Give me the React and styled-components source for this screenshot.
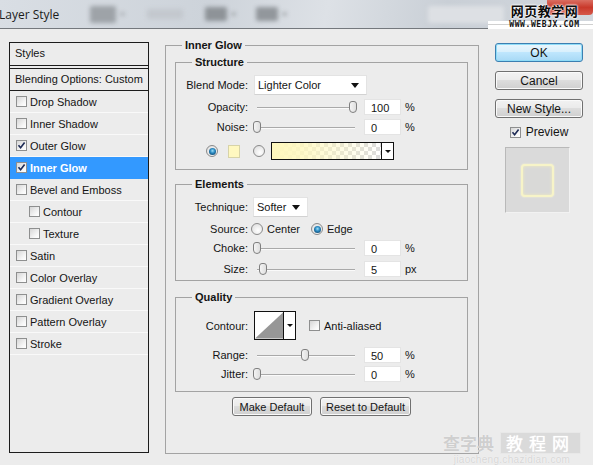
import React from "react"
import styled, { createGlobalStyle } from "styled-components"

const GlobalStyle = createGlobalStyle`
  html, body {
    margin: 0;
    padding: 0;
    background: #ececec;
  }
  body {
    font-family: "Liberation Sans", Arial, sans-serif;
    font-size: 11px;
    color: #141414;
  }
`

const Window = styled.div`
  position: relative;
  width: 593px;
  height: 465px;
  overflow: hidden;
  background: #ececec;
`

const TitleBar = styled.div`
  position: relative;
  height: 28px;
  display: flex;
  align-items: center;
  border-bottom: 1px solid #74787d;
  background: linear-gradient(100deg, #d9dee4 0%, #cdd3da 35%, #dde1e6 55%, #c9cfd6 75%, #d3d8de 100%);
  overflow: hidden;
`

const Title = styled.span`
  margin-left: -1px;
  font-family: "Open Sans", "Liberation Sans", sans-serif;
  font-size: 12px;
  color: #1b1b1b;
  white-space: nowrap;
`

const Ghost = styled.span`
  flex: none;
  width: ${p => p.$w}px;
  height: ${p => p.$h || 14}px;
  margin-left: ${p => p.$ml}px;
  background: ${p => p.$c};
  border-radius: 2px;
  filter: blur(2px);
`

const CloseButton = styled.div`
  position: absolute;
  top: -4px;
  right: 0;
  width: 46px;
  height: 19px;
  border-radius: 0 0 4px 4px;
  background: linear-gradient(#e38a7e, #c9392b 60%, #d6584a);
`

const Body = styled.div`
  display: flex;
  align-items: flex-start;
  padding: 10px 0 0 9px;
`

const StylesPanel = styled.div`
  flex: none;
  width: 140px;
  height: 411px;
  margin-top: 3px;
  box-sizing: border-box;
  border: 1px solid #1c1c1c;
`

const PanelHeader = styled.div`
  height: 22px;
  line-height: 21px;
  padding-left: 5px;
  border-bottom: 1px solid #1c1c1c;
  margin-bottom: 2px;
`

const BlendingRow = styled.div`
  height: 21px;
  line-height: 20px;
  padding-left: 5px;
  border-top: 1px solid #1c1c1c;
  border-bottom: 1px solid #1c1c1c;
  white-space: nowrap;
`

const StyleItem = styled.div`
  display: flex;
  align-items: center;
  gap: 3px;
  height: 21px;
  padding-left: ${p => (p.$indent ? 19 : 6)}px;
  border-bottom: 1px solid ${p => (p.$active ? "#3399ff" : "#f9f9f9")};
  background: ${p => (p.$active ? "#3399ff" : "transparent")};
  color: ${p => (p.$active ? "#fff" : "#141414")};
  font-weight: ${p => (p.$active ? "bold" : "normal")};
  white-space: nowrap;
`

const Box = styled.span`
  position: relative;
  flex: none;
  width: 11px;
  height: 11px;
  box-sizing: border-box;
  border: 1px solid #8e8f8f;
  background: linear-gradient(135deg, #d6d6d6, #f7f7f7 70%, #fff);
  margin-left: ${p => p.$ml || 0}px;

  svg {
    position: absolute;
    left: 0;
    top: 0;
  }
`

const Radio = styled.span`
  flex: none;
  display: inline-flex;
  align-items: center;
  justify-content: center;
  width: 12px;
  height: 12px;
  box-sizing: border-box;
  margin-left: ${p => p.$ml || 0}px;
  border: 1px solid #8a8a8a;
  border-radius: 50%;
  background: radial-gradient(circle at 60% 65%, #fff, #d9d9d9);

  &::after {
    content: "";
    display: ${p => (p.$on ? "block" : "none")};
    width: 7px;
    height: 7px;
    border-radius: 50%;
    background: radial-gradient(circle at 50% 40%, #9fe0f7 0, #2c8cc4 40%, #0c3f63 90%);
  }
`

const Main = styled.fieldset`
  flex: none;
  width: 314px;
  height: 415px;
  box-sizing: border-box;
  margin: 0 0 0 16px;
  padding: 4px 10px 0 9px;
  border: 1px solid #a3a3a3;
  min-width: 0;
`

const Group = styled.fieldset`
  margin: ${p => p.$mt || 0}px 0 0;
  padding: ${p => p.$pt}px 0 ${p => p.$pb}px 0;
  border: 1px solid #a3a3a3;
  min-width: 0;
`

const Legend = styled.legend`
  margin-left: ${p => p.$ml ?? 16}px;
  padding: 0 3px;
  font-weight: bold;
  line-height: 13px;
  color: #141414;
`

const Row = styled.div`
  display: flex;
  align-items: center;
  height: ${p => p.$h}px;
  margin-top: ${p => p.$mt || 0}px;
  padding-left: ${p => p.$pl || 0}px;
  white-space: nowrap;
`

const Label = styled.span`
  flex: none;
  width: 72px;
  text-align: right;
`

const Text = styled.span`
  margin-left: ${p => p.$ml || 0}px;
`

const Select = styled.div`
  flex: none;
  display: flex;
  align-items: center;
  justify-content: space-between;
  width: ${p => p.$w}px;
  height: 20px;
  margin-left: ${p => p.$ml}px;
  padding: 0 7px 0 3px;
  box-sizing: border-box;
  background: #fff;
  border: 1px solid #e3e3e3;
  border-bottom-color: #d2d2d2;

  &::after {
    content: "";
    border-left: 4px solid transparent;
    border-right: 4px solid transparent;
    border-top: 5px solid #111;
  }
`

const Slider = styled.div`
  position: relative;
  flex: none;
  width: 104px;
  height: 12px;
  margin-left: 5px;

  &::before {
    content: "";
    position: absolute;
    left: 4px;
    right: 2px;
    top: 6px;
    height: 1px;
    background: #a9a9a9;
    box-shadow: 0 1px 0 #fafafa;
  }
`

const Thumb = styled.span`
  position: absolute;
  top: 0;
  left: ${p => p.$pos}px;
  width: 8px;
  height: 12px;
  box-sizing: border-box;
  border: 1px solid #7f7f7f;
  border-radius: 3px 3px 4px 4px;
  background: linear-gradient(90deg, #f4f4f4, #dedede);
`

const NumberField = styled.div`
  flex: none;
  width: 37px;
  height: 16px;
  margin-left: 7px;
  padding-left: 6px;
  box-sizing: border-box;
  line-height: 16px;
  background: #fff;
  border: 1px solid #e4e4e4;
`

const Unit = styled.span`
  margin-left: 4px;
`

const Swatch = styled.span`
  flex: none;
  width: 12px;
  height: 13px;
  margin-left: 10px;
  box-sizing: border-box;
  background: #fff8c0;
  border: 1px solid #d7d3a8;
`

const GradientPicker = styled.div`
  flex: none;
  display: flex;
  width: 123px;
  height: 18px;
  margin-left: 6px;
  box-sizing: border-box;
  border: 1px solid #111;
`

const GradientStrip = styled.span`
  flex: 1;
  background:
    linear-gradient(90deg, #fff8bd 0%, rgba(255, 248, 189, 0.85) 25%, rgba(255, 248, 189, 0) 100%),
    repeating-conic-gradient(#dcdcdc 0 25%, #fff 0 50%) 0 0 / 8px 8px;
`

const DropArrow = styled.span`
  flex: none;
  display: flex;
  align-items: center;
  justify-content: center;
  width: 11px;
  background: #fff;
  border-left: 1px solid #111;

  &::after {
    content: "";
    border-left: 3px solid transparent;
    border-right: 3px solid transparent;
    border-top: 3px solid #111;
  }
`

const ContourPicker = styled.div`
  flex: none;
  display: flex;
  width: 42px;
  height: 29px;
  margin-left: 6px;
  box-sizing: border-box;
  border: 1px solid #111;
  background: #fff;
`

const ButtonRow = styled.div`
  display: flex;
  justify-content: center;
  gap: 8px;
  margin-top: 5px;
`

const PushButton = styled.button`
  height: 19px;
  width: ${p => p.$w}px;
  padding: 0;
  font-family: inherit;
  font-size: ${p => p.$fs || 11}px;
  color: #141414;
  border-radius: 3px;
  border: 1px solid ${p => (p.$primary ? "#3c7fb1" : "#707070")};
  background: ${p =>
    p.$primary
      ? "linear-gradient(#eaf6fd 0%, #d9f0fc 45%, #bee6fd 50%, #a7d9f5 100%)"
      : "linear-gradient(#f2f2f2 0%, #ebebeb 45%, #dddddd 50%, #cfcfcf 100%)"};
  box-shadow: ${p => (p.$primary ? "0 0 0 1px #8fdcf7 inset" : "0 0 0 1px #fafafa inset")};
`

const SideColumn = styled.div`
  flex: none;
  display: flex;
  flex-direction: column;
  align-items: center;
  gap: 9px;
  width: 88px;
  margin: 4px 0 0 16px;
`

const PreviewToggle = styled.div`
  display: flex;
  align-items: center;
  gap: 5px;
  margin-top: -2px;
  font-size: 12px;
`

const PreviewBox = styled.div`
  display: flex;
  align-items: center;
  justify-content: center;
  width: 65px;
  height: 66px;
  margin: -1px 3px 0 0;
  box-sizing: border-box;
  background: #dadada;
  border-top: 1px solid #b9b9b9;
  border-left: 1px solid #b9b9b9;
  border-right: 1px solid #f2f2f2;
  border-bottom: 1px solid #f2f2f2;
`

const GlowSquare = styled.div`
  width: 33px;
  height: 33px;
  box-sizing: border-box;
  border-radius: 4px;
  border: 2px solid #f7f4c8;
  background: #d9d9d7;
  box-shadow: 0 0 2px #fbf8d0, inset 0 0 3px #f2eebc;
`

const TopMark = styled.div`
  position: absolute;
  top: 3px;
  right: -8px;
  width: 113px;
  display: flex;
  flex-direction: column;
  align-items: center;
  font-family: "Noto Sans CJK SC", sans-serif;
`

const TopMarkTitle = styled.span`
  font-size: 13px;
  line-height: 15px;
  font-weight: bold;
  letter-spacing: 0.5px;
  color: #0c0c0c;
  text-shadow: 0 0 2px #fff, 0 0 2px #fff, 0 0 2px #fff;
`

const TopMarkUrl = styled.span`
  margin-top: 3px;
  width: 100%;
  text-align: center;
  font-family: "DejaVu Sans Mono", monospace;
  font-size: 8px;
  line-height: 8px;
  font-weight: bold;
  letter-spacing: 0.6px;
  color: #111;
  background: linear-gradient(#fff 0 40%, #d0d0d0 40% 55%, #fff 55%);
`

const BottomMark = styled.div`
  position: absolute;
  right: 12px;
  bottom: 0;
  display: flex;
  flex-direction: column;
  align-items: center;
  color: #cfcfcf;
  font-family: "Noto Sans CJK SC", sans-serif;
  text-shadow: 0 0 1px #fff;
`

const BottomMarkTitle = styled.div`
  display: flex;
  align-items: center;
  gap: 6px;
  font-size: 17px;
  line-height: 20px;
  font-weight: bold;
`

const BoxedWord = styled.span`
  padding: 0 5px;
  letter-spacing: 6px;
  font-weight: normal;
  color: #fff;
  background: #dadada;
  border: 1px solid #e8e8e8;
`

const BottomMarkUrl = styled.span`
  font-family: "Liberation Sans", sans-serif;
  font-size: 10px;
  line-height: 11px;
  letter-spacing: 0.3px;
  color: #d6d6d6;
`

function Check({ on, ml }) {
  return (
    <Box $ml={ml}>
      {on && (
        <svg width="9" height="9" viewBox="0 0 9 9">
          <path d="M1.5 4.2 L3.6 6.8 L7.6 1.4" fill="none" stroke="#1d2a55" strokeWidth="1.6" />
        </svg>
      )}
    </Box>
  )
}

function SliderRow({ label, value, pos, unit, h = 16, mt }) {
  return (
    <Row $h={h} $mt={mt}>
      <Label>{label}</Label>
      <Slider>
        <Thumb $pos={pos} />
      </Slider>
      <NumberField>{value}</NumberField>
      <Unit>{unit}</Unit>
    </Row>
  )
}

const styleItems = [
  { name: "Drop Shadow" },
  { name: "Inner Shadow" },
  { name: "Outer Glow", on: true },
  { name: "Inner Glow", on: true, active: true },
  { name: "Bevel and Emboss" },
  { name: "Contour", indent: true },
  { name: "Texture", indent: true },
  { name: "Satin" },
  { name: "Color Overlay" },
  { name: "Gradient Overlay" },
  { name: "Pattern Overlay" },
  { name: "Stroke" },
]

export default function App() {
  return (
    <>
      <GlobalStyle />
      <Window>
        <TitleBar>
          <Title>Layer Style</Title>
          <Ghost $w={26} $ml={31} $c="#9ea3a8" $h={17} />
          <Ghost $w={5} $ml={4} $c="#aeb2b7" $h={4} />
          <Ghost $w={36} $ml={22} $c="#c3c8ce" $h={10} />
          <Ghost $w={22} $ml={22} $c="#8e9398" $h={14} />
          <Ghost $w={5} $ml={4} $c="#a7abb0" $h={4} />
          <Ghost $w={22} $ml={20} $c="#92979c" $h={14} />
          <Ghost $w={5} $ml={4} $c="#a7abb0" $h={4} />
          <Ghost $w={76} $ml={141} $c="#dde0e4" $h={17} />
          <CloseButton />
        </TitleBar>

        <Body>
          <StylesPanel>
            <PanelHeader>Styles</PanelHeader>
            <BlendingRow>Blending Options: Custom</BlendingRow>
            {styleItems.map(item => (
              <StyleItem key={item.name} $indent={item.indent} $active={item.active}>
                <Check on={item.on} />
                {item.name}
              </StyleItem>
            ))}
          </StylesPanel>

          <Main>
            <Legend $ml={7}>Inner Glow</Legend>

            <Group $pt={6} $pb={9}>
              <Legend>Structure</Legend>
              <Row $h={20}>
                <Label>Blend Mode:</Label>
                <Select $w={113} $ml={6}>Lighter Color</Select>
              </Row>
              <SliderRow label="Opacity:" value="100" pos={96} unit="%" mt={4} />
              <SliderRow label="Noise:" value="0" pos={0} unit="%" mt={4} />
              <Row $h={18} $mt={7} $pl={30}>
                <Radio $on />
                <Swatch />
                <Radio $ml={13} />
                <GradientPicker>
                  <GradientStrip />
                  <DropArrow />
                </GradientPicker>
              </Row>
            </Group>

            <Group $mt={8} $pt={6} $pb={3}>
              <Legend>Elements</Legend>
              <Row $h={20}>
                <Label>Technique:</Label>
                <Select $w={55} $ml={5}>Softer</Select>
              </Row>
              <Row $h={14} $mt={5}>
                <Label>Source:</Label>
                <Radio $ml={3} />
                <Text $ml={4}>Center</Text>
                <Radio $on $ml={11} />
                <Text $ml={4}>Edge</Text>
              </Row>
              <SliderRow label="Choke:" value="0" pos={0} unit="%" mt={4} />
              <SliderRow label="Size:" value="5" pos={6} unit="px" mt={5} />
            </Group>

            <Group $mt={10} $pt={7} $pb={9}>
              <Legend>Quality</Legend>
              <Row $h={29}>
                <Label>Contour:</Label>
                <ContourPicker>
                  <svg width="29" height="27" viewBox="0 0 29 27">
                    <polygon points="0,27 29,0 29,27" fill="#979797" />
                  </svg>
                  <DropArrow />
                </ContourPicker>
                <Check ml={13} />
                <Text $ml={4}>Anti-aliased</Text>
              </Row>
              <SliderRow label="Range:" value="50" pos={48} unit="%" mt={7} />
              <SliderRow label="Jitter:" value="0" pos={0} unit="%" mt={3} />
            </Group>

            <ButtonRow>
              <PushButton $w={80}>Make Default</PushButton>
              <PushButton $w={91}>Reset to Default</PushButton>
            </ButtonRow>
          </Main>

          <SideColumn>
            <PushButton $w={88} $fs={12} $primary>OK</PushButton>
            <PushButton $w={88} $fs={12}>Cancel</PushButton>
            <PushButton $w={88} $fs={12}>New Style...</PushButton>
            <PreviewToggle>
              <Check on />
              Preview
            </PreviewToggle>
            <PreviewBox>
              <GlowSquare />
            </PreviewBox>
          </SideColumn>
        </Body>

        <TopMark>
          <TopMarkTitle>网页教学网</TopMarkTitle>
          <TopMarkUrl>WWW.WEBJX.COM</TopMarkUrl>
        </TopMark>

        <BottomMark>
          <BottomMarkTitle>
            查字典
            <BoxedWord>教程网</BoxedWord>
          </BottomMarkTitle>
          <BottomMarkUrl>jiaocheng.chazidian.com</BottomMarkUrl>
        </BottomMark>
      </Window>
    </>
  )
}
